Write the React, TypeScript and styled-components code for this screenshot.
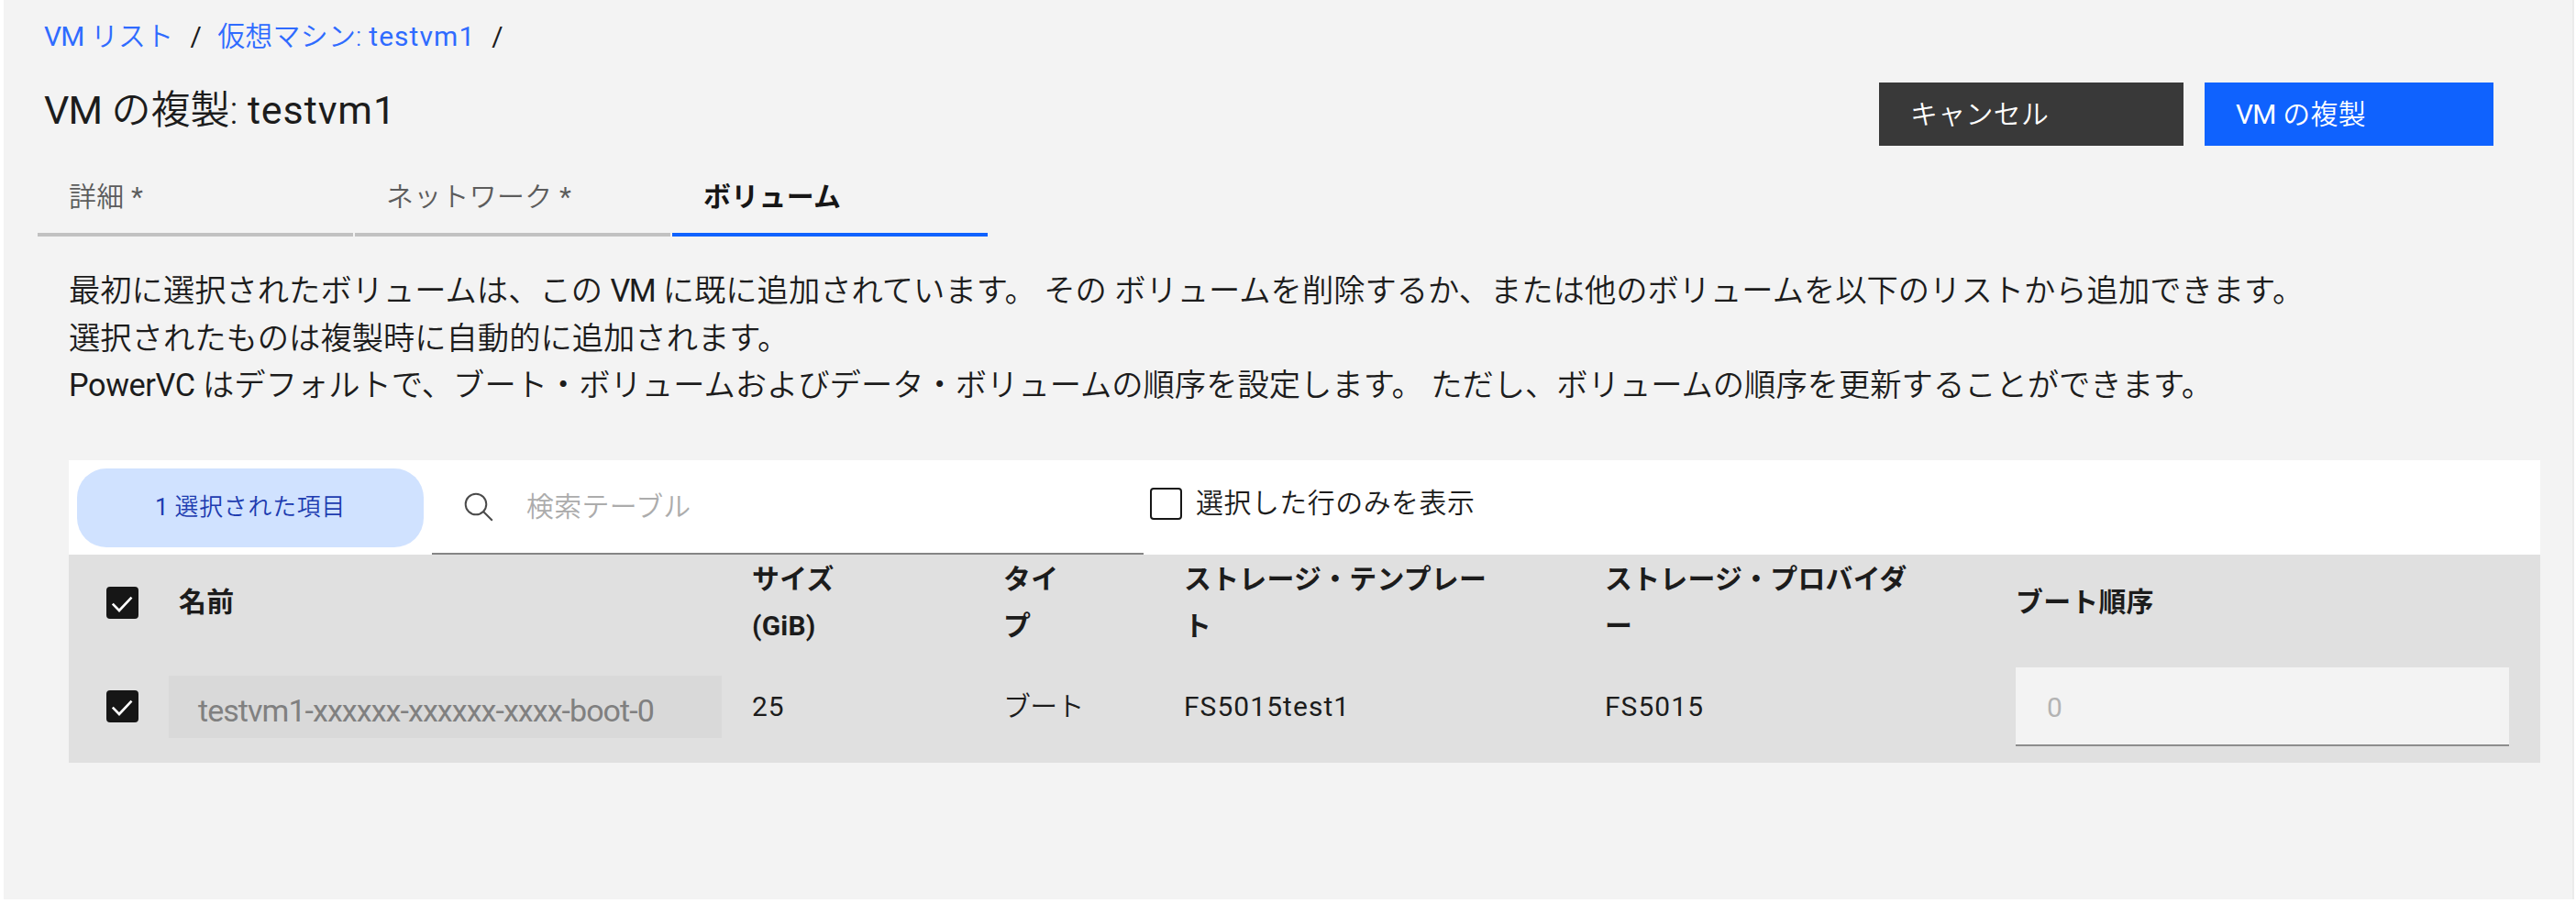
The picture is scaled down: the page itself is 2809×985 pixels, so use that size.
import React from "react";
import styled, { createGlobalStyle } from "styled-components";

const GlobalStyle = createGlobalStyle`
  *, *::before, *::after { box-sizing: border-box; }
  body {
    margin: 0;
    background: #ffffff;
    color: #1c1c1c;
    font-family: Roboto, "Noto Sans CJK JP", sans-serif;
    font-weight: 350;
  }
`;

const Page = styled.main`
  width: 2803px;
  height: 981px;
  margin-left: 4px;
  padding: 0 35px 0 37px;
  background: #f3f3f3;
  border-right: 2px solid #ebebeb;
`;

const Breadcrumb = styled.nav`
  display: flex;
  height: 80px;
  padding-left: 7px;
  font-size: 29.9px;
  line-height: 79px;
  letter-spacing: 0.3px;
`;

const Crumb = styled.a`
  color: #2f6bff;
  text-decoration: none;
`;

const Slash = styled.span`
  margin: 0 17px 0 18px;
  font-weight: 400;
`;

const Latin = styled.span<{ $spacing?: number }>`
  font-weight: 400;
  letter-spacing: ${(p) => p.$spacing ?? 0}px;
`;

const Header = styled.header`
  display: flex;
  justify-content: space-between;
  height: 92px;
  padding: 0 51px 0 7px;
`;

const Title = styled.h1`
  margin: 0;
  font-size: 43px;
  font-weight: 350;
  line-height: 80px;
`;

const Actions = styled.div`
  display: flex;
  gap: 23px;
  padding-top: 10px;
`;

const Button = styled.button<{ $primary?: boolean }>`
  width: ${(p) => (p.$primary ? 315 : 332)}px;
  height: 69px;
  padding: 0 34px;
  border: 0;
  background: ${(p) => (p.$primary ? "#0f62fe" : "#393939")};
  color: #ffffff;
  font: inherit;
  font-size: 29.9px;
  line-height: 69px;
  letter-spacing: 0.34px;
  text-align: left;
`;

const Tabs = styled.div`
  display: flex;
  gap: 2px;
`;

const Tab = styled.div<{ $active?: boolean }>`
  width: 344px;
  height: 86px;
  padding-left: 34px;
  border-bottom: 4px solid ${(p) => (p.$active ? "#0f62fe" : "#c1c1c1")};
  color: ${(p) => (p.$active ? "#161616" : "#5c5c5c")};
  font-size: 29.9px;
  font-weight: ${(p) => (p.$active ? 700 : 350)};
  line-height: 85px;
  letter-spacing: 0.34px;
`;

const Description = styled.p`
  margin: 34px 0 55px 34px;
  font-size: 34.3px;
  line-height: 51.7px;
`;

const TableBox = styled.section`
  margin-left: 34px;
  background: #e0e0e0;
`;

const Toolbar = styled.div`
  display: flex;
  height: 103px;
  background: #ffffff;
`;

const Chip = styled.div`
  width: 378px;
  height: 86px;
  margin: 9px 9px 0;
  border-radius: 32px;
  background: #d0e2ff;
  color: #1d3cb0;
  font-size: 25.8px;
  line-height: 84px;
  letter-spacing: 0.85px;
  text-align: center;
`;

const Search = styled.div`
  display: flex;
  gap: 35px;
  width: 776px;
  padding-left: 34px;
  border-bottom: 2px solid #858585;
  color: #acacac;
  font-size: 29.9px;
  line-height: 101px;
  letter-spacing: 0.34px;
  svg { margin-top: 34px; }
`;

const Filter = styled.label`
  display: flex;
  gap: 15px;
  margin-left: 7px;
  padding-top: 30px;
  font-size: 29.9px;
  line-height: 34px;
  letter-spacing: 0.55px;
`;

const Box = styled.span<{ $checked?: boolean }>`
  display: block;
  width: 35px;
  height: 35px;
  border: 2px solid #161616;
  border-radius: 4px;
  background: ${(p) => (p.$checked ? "#161616" : "transparent")};
  svg { display: block; margin: -2px; }
`;

const Row = styled.div<{ $height: number }>`
  display: grid;
  grid-template-columns: 109px 636px 274px 197px 459px 448px 538px;
  align-items: center;
  height: ${(p) => p.$height}px;
  font-size: 29.9px;
  line-height: 51.6px;
  letter-spacing: 0.25px;
`;

const CheckCell = styled.div`
  padding-left: 41px;
`;

const HeadCell = styled.div<{ $indent?: number }>`
  padding-left: ${(p) => p.$indent ?? 0}px;
  font-weight: 700;
`;

const Cell = styled.div`
  padding-top: 1px;
  letter-spacing: -0.6px;
`;

const NameField = styled.div`
  width: 603px;
  height: 68px;
  padding-left: 32px;
  background: #d9d9d9;
  color: #808080;
  font-size: 34px;
  font-weight: 400;
  line-height: 76px;
  letter-spacing: -0.95px;
`;

const OrderInput = styled.div`
  height: 86px;
  padding-left: 34px;
  border-bottom: 2px solid #8d8d8d;
  background: #f3f3f3;
  color: #b3b3b3;
  font-weight: 400;
  line-height: 87px;
`;

const Checkbox = ({ checked }: { checked?: boolean }) => (
  <Box $checked={checked}>
    {checked && (
      <svg width="35" height="35" viewBox="0 0 35 35" fill="none" stroke="#fff" strokeWidth="2.6">
        <path d="M6.8 18.6 14 26 27.5 11.6" />
      </svg>
    )}
  </Box>
);

const SearchIcon = () => (
  <svg width="34" height="34" viewBox="0 0 34 34" fill="none" stroke="#4a4a4a" strokeWidth="2">
    <circle cx="14" cy="14" r="11.3" />
    <path d="M22 22 31.8 31.8" />
  </svg>
);

export default function App() {
  return (
    <>
      <GlobalStyle />
      <Page>
        <Breadcrumb>
          <Crumb href="#"><Latin $spacing={-0.9}>VM</Latin> リスト</Crumb>
          <Slash>/</Slash>
          <Crumb href="#">仮想マシン: <Latin $spacing={1.1}>testvm1</Latin></Crumb>
          <Slash>/</Slash>
        </Breadcrumb>
        <Header>
          <Title><Latin $spacing={-1}>VM</Latin> の複製: <Latin $spacing={0.9}>testvm1</Latin></Title>
          <Actions>
            <Button>キャンセル</Button>
            <Button $primary><Latin $spacing={-0.7}>VM</Latin> の複製</Button>
          </Actions>
        </Header>
        <Tabs>
          <Tab>詳細 <Latin>*</Latin></Tab>
          <Tab>ネットワーク <Latin>*</Latin></Tab>
          <Tab $active>ボリューム</Tab>
        </Tabs>
        <Description>
          最初に選択されたボリュームは、この <Latin $spacing={-1.4}>VM</Latin> に既に追加されています。 その ボリュームを削除するか、または他のボリュームを以下のリストから追加できます。<br />
          選択されたものは複製時に自動的に追加されます。<br />
          <Latin $spacing={-0.4}>PowerVC</Latin> はデフォルトで、ブート・ボリュームおよびデータ・ボリュームの順序を設定します。 ただし、ボリュームの順序を更新することができます。
        </Description>
        <TableBox>
          <Toolbar>
            <Chip><Latin>1</Latin> 選択された項目</Chip>
            <Search><SearchIcon />検索テーブル</Search>
            <Filter><Checkbox />選択した行のみを表示</Filter>
          </Toolbar>
          <Row $height={104}>
            <CheckCell><Checkbox checked /></CheckCell>
            <HeadCell $indent={11}>名前</HeadCell>
            <HeadCell>サイズ<br />(GiB)</HeadCell>
            <HeadCell>タイ<br />プ</HeadCell>
            <HeadCell>ストレージ・テンプレー<br />ト</HeadCell>
            <HeadCell>ストレージ・プロバイダ<br />ー</HeadCell>
            <HeadCell>ブート順序</HeadCell>
          </Row>
          <Row $height={123}>
            <CheckCell><Checkbox checked /></CheckCell>
            <NameField>testvm1-xxxxxx-xxxxxx-xxxx-boot-0</NameField>
            <Cell><Latin $spacing={1}>25</Latin></Cell>
            <Cell>ブート</Cell>
            <Cell><Latin $spacing={1.1}>FS5015test1</Latin></Cell>
            <Cell><Latin $spacing={1.1}>FS5015</Latin></Cell>
            <OrderInput>0</OrderInput>
          </Row>
        </TableBox>
      </Page>
    </>
  );
}
